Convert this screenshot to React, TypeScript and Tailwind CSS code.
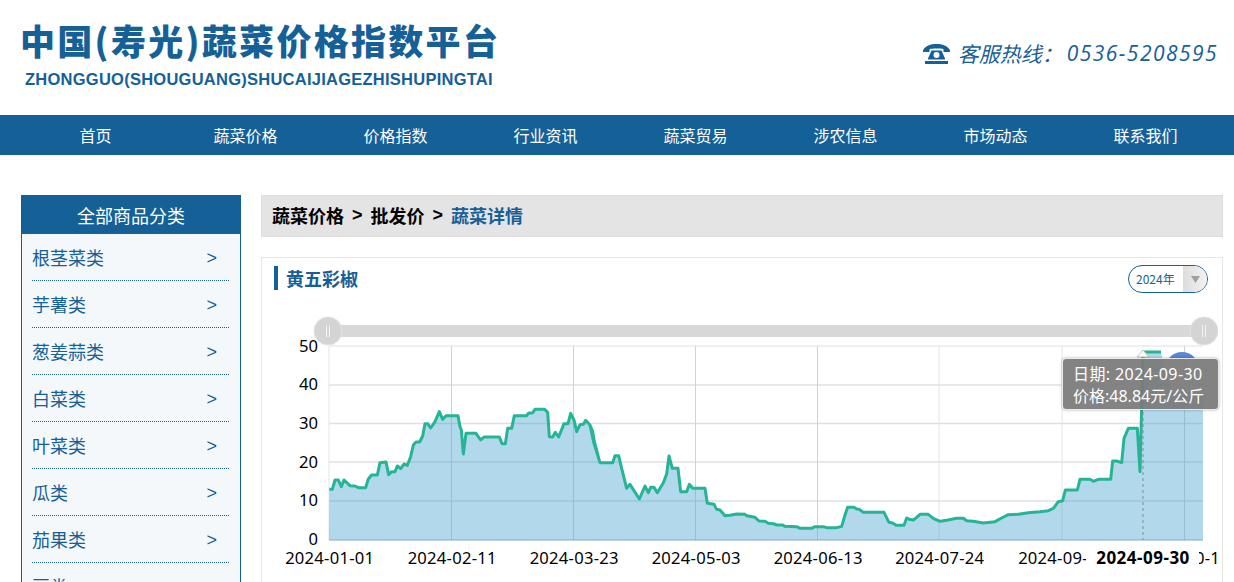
import React from "react";

const NAV = ["首页", "蔬菜价格", "价格指数", "行业资讯", "蔬菜贸易", "涉农信息", "市场动态", "联系我们"];
const CATS = ["根茎菜类", "芋薯类", "葱姜蒜类", "白菜类", "叶菜类", "瓜类", "茄果类", "豆类"];

const FONT = "[font-family:'Noto_Sans_CJK_SC','Noto_Sans',sans-serif]";
const SVG_FONT = "'Noto Sans','Noto Sans CJK SC',sans-serif";

const A: number[][] = [[178,538],[187,538],[195,510],[205,510],[214,530],[222,510],[240,527],[255,528],[265,533],[287,533],[295,507],[305,495],[322,495],[330,458],[348,456],[356,494],[365,485],[375,485],[382,468],[392,476],[402,462],[412,466],[422,440],[430,405],[438,396],[449,396],[458,378],[465,341],[473,341],[482,354],[495,335],[508,305],[518,328],[528,317],[564,317],[570,350],[574,360],[580,432],[588,370],[618,370],[632,390],[642,381],[688,381],[696,401],[706,401],[713,355],[725,355],[733,317],[770,317],[775,310],[788,308],[795,298],[824,298],[833,307],[838,380],[848,381],[856,367],[866,381],[882,341],[894,341],[902,310],[912,330],[920,365],[930,344],[940,343],[947,331],[960,345],[968,365],[975,405],[985,440]];
const B: number[][] = [[0,75],[12,130],[30,188],[68,188],[75,167],[86,167],[95,205],[110,265],[120,253],[148,297],[165,258],[175,278],[182,262],[192,262],[202,278],[220,248],[230,222],[237,168],[247,205],[264,205],[272,275],[290,275],[298,253],[308,265],[345,265],[352,310],[372,313],[380,328],[390,330],[405,347],[420,346],[440,342],[465,343],[470,347],[495,352],[507,363],[525,364],[535,370],[550,371],[560,375],[578,375],[585,379],[620,380],[630,385],[665,385],[675,380],[700,380],[710,383],[740,383],[755,379],[765,345],[773,322],[792,322],[800,327],[808,328],[820,337],[882,337],[897,367],[908,369],[918,376],[942,376],[950,354],[958,358],[970,360],[980,352]];
const C: number[][] = [[0,343],[25,343],[40,355],[60,364],[80,361],[110,355],[130,355],[140,362],[160,364],[190,369],[225,365],[245,354],[265,344],[295,343],[325,338],[360,335],[385,332],[400,325],[415,305],[428,302],[436,270],[472,270],[480,238],[510,238],[520,244],[535,238],[572,238],[578,183],[590,183],[605,188],[612,115],[625,85],[652,85],[660,215]];

const pts: number[][] = [
  ...A.map(([x, y]) => [x / 3 + 270, y / 3 + 310]),
  ...B.map(([x, y]) => [x / 3 + 590, y / 3 + 400]),
  ...C.map(([x, y]) => [x / 3 + 920, y / 3 + 400]),
  [1143, 352],
  [1161, 352],
  [1163, 362],
  [1172, 392],
  [1203, 392],
];
const linePath = pts.map((p) => p.join(",")).join(" ");
const areaPath = `329,540 ${linePath} 1203,540`;

const GRID_Y = [346, 385, 423.5, 462, 501];
const GRID_X = [329, 451.5, 573.5, 695.5, 817.5, 939, 1062, 1184.5];
const X_LABELS: [number, string][] = [
  [329, "2024-01-01"], [451.5, "2024-02-11"], [573.5, "2024-03-23"], [695.5, "2024-05-03"],
  [817.5, "2024-06-13"], [939, "2024-07-24"], [1062, "2024-09-03"], [1184.5, "2024-10-14"],
];

function Handle({ x }: { x: number }) {
  return (
    <g>
      <circle cx={x} cy={331} r={14} fill="#d4d4d4" stroke="#e4e4e4" strokeWidth={1} />
      <path d={`M${x - 1.5} 325V337M${x + 1.5} 325V337`} stroke="#f2f2f2" strokeWidth={1} />
    </g>
  );
}

function Chart() {
  return (
    <svg viewBox="262 310 957 272" className="block w-[957px] h-[272px]">
      <defs>
        <clipPath id="pin">
          <rect x={1160} y={340} width={50} height={19} />
        </clipPath>
      </defs>
      <rect x={340} y={325} width={852} height={12} fill="#d8d8d8" />
      <Handle x={328} />
      <Handle x={1204} />
      {GRID_Y.map((y) => (
        <line key={y} x1={329} x2={1203} y1={y} y2={y} stroke="#e0e0e0" strokeWidth={y === 346 ? 1 : 1.5} />
      ))}
      {GRID_X.map((x) => (
        <line key={x} x1={x} x2={x} y1={346} y2={540} stroke={x === 939 || x === 1062 || x === 329 ? "#e4e4e4" : "#d2d2d2"} strokeWidth={1} />
      ))}
      <circle cx={1182} cy={369} r={17} fill="#5b87d8" clipPath="url(#pin)" />
      <polygon points={areaPath} fill="#3f9dd0" fillOpacity={0.4} />
      <line x1={329} x2={1203} y1={540} y2={540} stroke="#86a9c0" strokeWidth={1} />
      <polyline points={linePath.split(" ").slice(0, -3).join(" ")} fill="none" stroke="#26b594" strokeWidth={3} strokeLinejoin="round" />
      <line x1={1143} x2={1143} y1={352} y2={540} stroke="#7d8c96" strokeWidth={1} strokeDasharray="3 3" />
      <polygon points="1143,350 1137,357 1149,357" fill="#ffffff" stroke="#b5b5b5" strokeWidth={0.8} />
      {[0, 10, 20, 30, 40, 50].map((v, i) => (
        <text key={v} x={318} y={545 - i * 38.7} textAnchor="end" fontSize={16.6} fill="#000" fontFamily={SVG_FONT}>
          {v}
        </text>
      ))}
      {X_LABELS.map(([x, t]) => (
        <text key={t} x={x + 0.7} y={564} textAnchor="middle" fontSize={16.6} letterSpacing={0.25} fill="#000" fontFamily={SVG_FONT}>
          {t}
        </text>
      ))}
      <rect x={1086} y={548} width={113} height={22} fill="#fff" />
      <text x={1143} y={564} textAnchor="middle" fontSize={17} letterSpacing={0.5} fontWeight={700} fill="#000" fontFamily={SVG_FONT}>
        2024-09-30
      </text>
    </svg>
  );
}

export default function App() {
  return (
    <div className={`w-[1234px] h-[582px] overflow-hidden bg-white relative ${FONT}`}>
      <header className="h-[115px] flex justify-between">
        <div className="pl-[20px] pt-[18px]">
          <div className="text-[35px] leading-[44px] font-black tracking-[2.3px] text-[#166098] whitespace-nowrap">
            中国(寿光)蔬菜价格指数平台
          </div>
          <div className="pl-[5px] mt-[8px] text-[16.5px] leading-[18px] font-bold tracking-[0.25px] text-[#166098] whitespace-nowrap [font-family:'Liberation_Sans',sans-serif]">
            ZHONGGUO(SHOUGUANG)SHUCAIJIAGEZHISHUPINGTAI
          </div>
        </div>
        <div className="flex items-center gap-[8px] pr-[16px] pb-[8px] text-[#166098]">
          <svg width="27" height="20" viewBox="0 0 27 20" fill="#166098">
            <path d="M0 6.5C2 1.500 8 0 13.500 0S25 1.500 27 6.500V8H20.500V5.200C18 4.400 9 4.400 6.500 5.200V8H0Z" />
            <path d="M8.500 6.500H18.500L22 14.500V15.500H5V14.500ZM13.500 8A3 3 0 1 0 13.500 14A3 3 0 1 0 13.500 8Z" fillRule="evenodd" />
            <rect x="2" y="17" width="23" height="3" />
          </svg>
          <span className="text-[21px] italic font-normal whitespace-nowrap">客服热线：</span>
          <span className="-ml-[4px] text-[21px] italic font-normal tracking-[1.45px] whitespace-nowrap [font-family:'Open_Sans',sans-serif]">0536-5208595</span>
        </div>
      </header>

      <nav className="h-[40px] bg-[#166098] flex pl-[20.5px]">
        {NAV.map((n) => (
          <div key={n} className="w-[150px] text-center text-white text-[16px] leading-[40px]">
            {n}
          </div>
        ))}
      </nav>

      <main className="flex gap-[20px] pl-[21px] pt-[40px]">
        <aside className="w-[220px] h-[600px] border border-[#166098] bg-[#f4f8fb] shrink-0">
          <div className="h-[39px] -mt-px -mx-px bg-[#166098] text-white text-center text-[18px] leading-[40px]">
            全部商品分类
          </div>
          <ul className="pl-[10px] pr-[11px]">
            {CATS.map((c) => (
              <li key={c} className="h-[47px] border-b border-dotted border-[#166098] flex items-center justify-between text-[#166098] text-[18px]">
                <span>{c}</span>
                <span className="mr-[12px] mt-[2px] text-[18px] [font-family:'Liberation_Sans',sans-serif]">&gt;</span>
              </li>
            ))}
          </ul>
        </aside>

        <section className="w-[962px]">
          <div className="h-[42px] pb-[2px] bg-[#e4e4e4] border border-[#dddddd] flex items-center pl-[10px] gap-[8px] text-[18px] font-bold text-black">
            <span>蔬菜价格</span>
            <span className="[font-family:'Liberation_Sans',sans-serif]">&gt;</span>
            <span>批发价</span>
            <span className="[font-family:'Liberation_Sans',sans-serif]">&gt;</span>
            <span className="text-[#166098]">蔬菜详情</span>
          </div>
          <div className="relative mt-[20px] h-[400px] border border-[#e6e6e6]">
            <div className="flex items-start justify-between pt-[8px] pl-[12px] pr-[14px]">
              <div className="h-[24px] border-l-[4px] border-[#166098] pl-[8px] text-[18px] leading-[24px] font-bold text-[#166098]">
                黄五彩椒
              </div>
              <div className="flex w-[80px] h-[28px] -mt-[1px] rounded-full border border-[#166098] overflow-hidden">
                <span className="flex-1 pl-[7px] text-[12px] leading-[25px] text-[#166098]">2024年</span>
                <span className="w-[24px] flex items-center justify-center bg-gradient-to-r from-[#dddddd] to-[#f2f2f2]">
                  <svg width="9" height="7" viewBox="0 0 9 7"><path d="M0 0H9L4.500 7Z" fill="#a0a0a0" /></svg>
                </span>
              </div>
            </div>
            <div className="mt-[17px]">
              <Chart />
            </div>
            <div className="absolute left-[800px] top-[100px] w-[157px] h-[52px] rounded-[4px] border border-[#e8e8e8] bg-[rgba(122,122,122,0.93)] shadow-[0_0_3px_rgba(0,0,0,0.3)] text-white text-[16px] leading-[22px] pt-[4px] pl-[10px] whitespace-nowrap [font-family:'Noto_Sans','Noto_Sans_CJK_SC',sans-serif]">
              <div className="tracking-[0.4px]">日期: 2024-09-30</div>
              <div>价格:48.84元/公斤</div>
            </div>
          </div>
        </section>
      </main>
    </div>
  );
}
